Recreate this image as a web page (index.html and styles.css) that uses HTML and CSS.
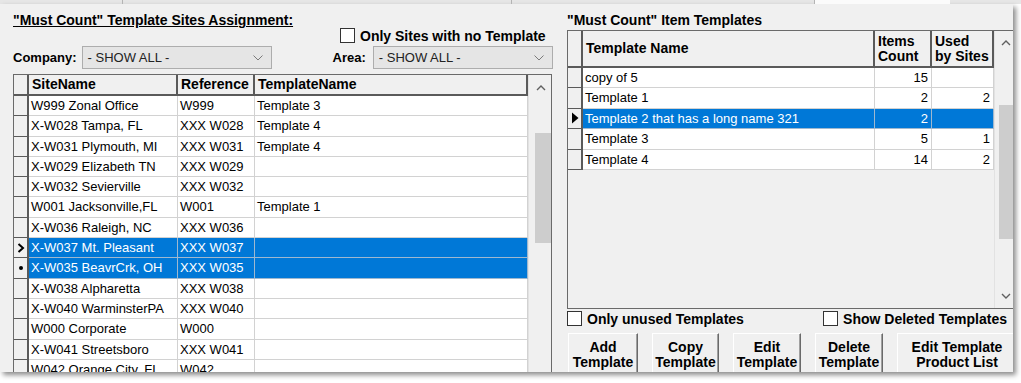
FILE: index.html
```html
<!DOCTYPE html>
<html lang="en">
<head>
    <meta charset="UTF-8">
    <title>Must Count Templates</title>
    <link rel="stylesheet" href="styles.css">
</head>
<body>
    <div class="topstrip">
        <span class="seg seg1"></span>
        <span class="seg seg2"></span>
        <span class="seg seg3"></span>
        <span class="seg seg4"></span>
    </div>
    <div class="form">
        <section class="sites">
            <h2 class="title underline">"Must Count" Template Sites Assignment:</h2>
            <label class="check only-sites"><span class="box"></span>Only Sites with no Template</label>
            <div class="filters">
                <span class="lbl">Company:</span>
                <div class="combo company">- SHOW ALL -
                    <svg class="chev" width="10" height="6" viewBox="0 0 10 6"><path d="M0.5 0.5 L5 5 L9.5 0.5" fill="none" stroke="#7a7a7a" stroke-width="1"/></svg>
                </div>
                <span class="lbl area-lbl">Area:</span>
                <div class="combo area">- SHOW ALL -
                    <svg class="chev" width="10" height="6" viewBox="0 0 10 6"><path d="M0.5 0.5 L5 5 L9.5 0.5" fill="none" stroke="#7a7a7a" stroke-width="1"/></svg>
                </div>
            </div>

            <div class="grid sites-grid">
                <div class="grid-body">
                    <div class="row head">
                        <div class="ind"></div>
                        <div class="cell">SiteName</div>
                        <div class="cell">Reference</div>
                        <div class="cell">TemplateName</div>
                    </div>
                    <div class="row"><div class="ind"></div><div class="cell">W999 Zonal Office</div><div class="cell">W999</div><div class="cell">Template 3</div></div>
                    <div class="row"><div class="ind"></div><div class="cell">X-W028 Tampa, FL</div><div class="cell">XXX W028</div><div class="cell">Template 4</div></div>
                    <div class="row"><div class="ind"></div><div class="cell">X-W031 Plymouth, MI</div><div class="cell">XXX W031</div><div class="cell">Template 4</div></div>
                    <div class="row"><div class="ind"></div><div class="cell">X-W029 Elizabeth TN</div><div class="cell">XXX W029</div><div class="cell"></div></div>
                    <div class="row"><div class="ind"></div><div class="cell">X-W032 Sevierville</div><div class="cell">XXX W032</div><div class="cell"></div></div>
                    <div class="row"><div class="ind"></div><div class="cell">W001 Jacksonville,FL</div><div class="cell">W001</div><div class="cell">Template 1</div></div>
                    <div class="row"><div class="ind"></div><div class="cell">X-W036 Raleigh, NC</div><div class="cell">XXX W036</div><div class="cell"></div></div>
                    <div class="row sel">
                        <div class="ind"><svg width="8" height="10" viewBox="0 0 8 10"><path d="M1.5 1 L6 5 L1.5 9" fill="none" stroke="#000" stroke-width="2"/></svg></div>
                        <div class="cell">X-W037 Mt. Pleasant</div><div class="cell">XXX W037</div><div class="cell"></div>
                    </div>
                    <div class="row sel">
                        <div class="ind"><span class="dot"></span></div>
                        <div class="cell">X-W035 BeavrCrk, OH</div><div class="cell">XXX W035</div><div class="cell"></div>
                    </div>
                    <div class="row"><div class="ind"></div><div class="cell">X-W038 Alpharetta</div><div class="cell">XXX W038</div><div class="cell"></div></div>
                    <div class="row"><div class="ind"></div><div class="cell">X-W040 WarminsterPA</div><div class="cell">XXX W040</div><div class="cell"></div></div>
                    <div class="row"><div class="ind"></div><div class="cell">W000 Corporate</div><div class="cell">W000</div><div class="cell"></div></div>
                    <div class="row"><div class="ind"></div><div class="cell">X-W041 Streetsboro</div><div class="cell">XXX W041</div><div class="cell"></div></div>
                    <div class="row"><div class="ind"></div><div class="cell">W042 Orange City, FL</div><div class="cell">W042</div><div class="cell"></div></div>
                </div>
                <div class="vscroll">
                    <svg class="arrow" width="10" height="6" viewBox="0 0 10 6"><path d="M1 5 L5 1 L9 5" fill="none" stroke="#606060" stroke-width="1.4"/></svg>
                    <div class="thumb"></div>
                </div>
            </div>
        </section>

        <section class="templates">
            <h2 class="title">"Must Count" Item Templates</h2>
            <div class="grid tpl-grid">
                <div class="grid-body">
                    <div class="row head">
                        <div class="ind"></div>
                        <div class="cell">Template Name</div>
                        <div class="cell">Items<br>Count</div>
                        <div class="cell">Used<br>by Sites</div>
                    </div>
                    <div class="row"><div class="ind"></div><div class="cell">copy of 5</div><div class="cell num">15</div><div class="cell num"></div></div>
                    <div class="row"><div class="ind"></div><div class="cell">Template 1</div><div class="cell num">2</div><div class="cell num">2</div></div>
                    <div class="row sel">
                        <div class="ind"><svg width="8" height="12" viewBox="0 0 8 12"><path d="M1 0.5 L7.5 6 L1 11.5 Z" fill="#000"/></svg></div>
                        <div class="cell">Template 2 that has a long name 321</div><div class="cell num">2</div><div class="cell num"></div>
                    </div>
                    <div class="row"><div class="ind"></div><div class="cell">Template 3</div><div class="cell num">5</div><div class="cell num">1</div></div>
                    <div class="row"><div class="ind"></div><div class="cell">Template 4</div><div class="cell num">14</div><div class="cell num">2</div></div>
                </div>
                <div class="vscroll">
                    <svg class="arrow" width="10" height="6" viewBox="0 0 10 6"><path d="M1 5 L5 1 L9 5" fill="none" stroke="#606060" stroke-width="1.4"/></svg>
                    <div class="thumb"></div>
                    <svg class="arrow down" width="10" height="6" viewBox="0 0 10 6"><path d="M1 1 L5 5 L9 1" fill="none" stroke="#606060" stroke-width="1.4"/></svg>
                </div>
            </div>

            <div class="checks">
                <label class="check"><span class="box"></span>Only unused Templates</label>
                <label class="check deleted"><span class="box"></span>Show Deleted Templates</label>
            </div>

            <div class="buttons">
                <button class="btn b-add">Add<br>Template</button>
                <button class="btn b-copy">Copy<br>Template</button>
                <button class="btn b-edit">Edit<br>Template</button>
                <button class="btn b-del">Delete<br>Template</button>
                <button class="btn b-list">Edit Template<br>Product List</button>
            </div>
        </section>
    </div>
</body>
</html>
```

FILE: styles.css
```css
*{
    margin: 0;
    padding: 0;
    box-sizing: border-box;
}
body
{
    background-color: #ffffff;
    font-family: "Liberation Sans", Arial, sans-serif;
    font-size: 13px;
    color: #000;
    width: 1021px;
    height: 383px;
    overflow: hidden;
}
.topstrip
{
    height: 4px;
    display: flex;
    background-color: #e6e6e6;
}
.seg
{
    height: 4px;
    border-right: 1px solid #b4b4b4;
}
.seg1 { width: 123px; }
.seg2 { width: 389px; }
.seg3 { width: 303px; }
.seg4 { width: 135px; background-color: #fbfbfb; border-right: 0; }

.form
{
    width: 1013px;
    height: 368px;
    background-color: #f0f0f0;
    display: flex;
    gap: 14px;
    padding-left: 13px;
    overflow: hidden;
    box-shadow: 3px 3px 5px rgba(0, 0, 0, 0.45);
}
.title
{
    font-size: 14px;
    font-weight: bold;
    line-height: 16px;
    margin-top: 8px;
    white-space: nowrap;
}
.underline
{
    text-decoration: underline;
}

/* checkboxes */
.check
{
    display: flex;
    align-items: center;
    font-size: 14px;
    font-weight: bold;
    height: 17px;
    white-space: nowrap;
}
.box
{
    width: 15px;
    height: 15px;
    border: 1px solid #333;
    background-color: #fff;
    margin-right: 5px;
}
.only-sites
{
    margin-left: 327px;
    margin-top: -1px;
}

/* filters */
.sites
{
    width: 540px;
    flex: none;
}
.filters
{
    display: flex;
    align-items: center;
    height: 23px;
    margin-top: 2px;
    width: 560px;
}
.lbl
{
    font-size: 13px;
    font-weight: bold;
}
.combo
{
    position: relative;
    height: 23px;
    line-height: 21px;
    background-color: #e5e5e5;
    border: 1px solid #adadad;
    padding-left: 5px;
    font-size: 13px;
    color: #222;
    margin-left: 5px;
    flex: none;
}
.company { width: 190px; }
.area { width: 180px; margin-left: 7px; }
.area-lbl { margin-left: 61px; }
.chev
{
    position: absolute;
    right: 8px;
    top: 8px;
}

/* grids */
.grid
{
    display: flex;
    border: 1px solid #6a6a6a;
    overflow: hidden;
}
.sites-grid
{
    width: 539px;
    height: 320px;
    margin-top: 5px;
    background-color: #fff;
}
.grid-body
{
    flex: 1;
}
.row
{
    display: grid;
    height: 20.3px;
}
.sites-grid .row
{
    grid-template-columns: 15px 149px 77px 273px;
}
.cell
{
    border-right: 1px solid #d2d2d2;
    border-bottom: 1px solid #d2d2d2;
    padding-left: 2px;
    line-height: 19px;
    white-space: nowrap;
    overflow: hidden;
    background-color: #fff;
}
.ind
{
    background-color: #f0f0f0;
    border-right: 2px solid #5a5a5a;
    border-bottom: 1px solid #5a5a5a;
    display: flex;
    align-items: center;
    justify-content: center;
}
.dot
{
    width: 4px;
    height: 4px;
    border-radius: 50%;
    background-color: #000;
}
.row.head
{
    height: 21px;
}
.head .cell
{
    background-color: #f0f0f0;
    font-size: 14px;
    font-weight: bold;
    border-right: 2px solid #5a5a5a;
    border-bottom: 2px solid #5a5a5a;
    padding-left: 3px;
    line-height: 18px;
}
.head .ind
{
    border-bottom: 2px solid #5a5a5a;
}
.sel .cell
{
    background-color: #0078d7;
    color: #fff;
    border-color: #9fb8cf;
}
.num
{
    text-align: right;
    padding-right: 3px;
}

/* scrollbars */
.vscroll
{
    position: relative;
    background-color: #f0f0f0;
    border-left: 1px solid #e2e2e2;
}
.sites-grid .vscroll
{
    width: 24px;
}
.arrow
{
    position: absolute;
    left: 7px;
    top: 10px;
}
.thumb
{
    position: absolute;
    background-color: #cdcdcd;
}
.sites-grid .thumb
{
    left: 6px;
    width: 17px;
    top: 58px;
    height: 110px;
}

/* right side */
.templates
{
    width: 446px;
    flex: none;
}
.tpl-grid
{
    width: 448px;
    height: 279px;
    margin-top: 2px;
    background-color: #f0f0f0;
}
.tpl-grid .row
{
    grid-template-columns: 15px 292px 57px 62px;
    height: 20.4px;
}
.tpl-grid .row.head
{
    height: 37px;
}
.tpl-grid .head .cell
{
    line-height: 15px;
    display: flex;
    align-items: center;
}
.tpl-grid .vscroll
{
    width: 20px;
}
.tpl-grid .arrow
{
    left: 6px;
    top: 9px;
}
.tpl-grid .arrow.down
{
    top: auto;
    bottom: 9px;
}
.tpl-grid .thumb
{
    left: 4px;
    width: 14px;
    top: 74px;
    height: 134px;
}

.checks
{
    display: flex;
    margin-top: 1px;
}
.deleted
{
    margin-left: auto;
    margin-right: 6px;
}

.buttons
{
    display: flex;
    gap: 14px;
    margin-top: 6px;
    padding-left: 1px;
}
.btn
{
    height: 40px;
    font-family: "Liberation Sans", Arial, sans-serif;
    font-size: 14px;
    font-weight: bold;
    line-height: 15px;
    padding-top: 3px;
    text-align: center;
    background-color: #f0f0f0;
    border: 1px solid;
    border-color: #ffffff #6a6a6a #6a6a6a #ffffff;
    box-shadow: inset -1px 0 #a0a0a0;
    color: #000;
    white-space: nowrap;
    flex: none;
}
.b-add { width: 70px; }
.b-copy { width: 67px; }
.b-edit { width: 68px; }
.b-del { width: 68px; }
.b-list { width: 120px; }
```
